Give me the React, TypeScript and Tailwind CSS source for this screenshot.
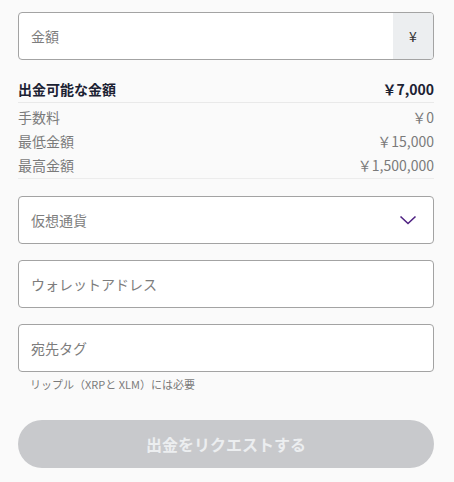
import React from "react";

const font = { fontFamily: '"Noto Sans CJK JP", "Noto Sans", sans-serif' };

function Row({ label, value }: { label: string; value: string }) {
  return (
    <div className="flex h-[24px] items-center justify-between text-[14px] text-[#7a7a7a]">
      <span>{label}</span>
      <span>{value}</span>
    </div>
  );
}

function TextBox({ placeholder }: { placeholder: string }) {
  return (
    <div className="flex h-[48px] items-center rounded-[4px] border border-[#a3a3a3] bg-white pl-[12px] text-[14px] text-[#7d7d7d]">
      {placeholder}
    </div>
  );
}

export default function App() {
  return (
    <div className="min-h-[482px] w-[454px] bg-[#fafafa] px-[18px] pt-[12px]" style={font}>
      <div className="w-[416px]">
        <div className="flex h-[48px] overflow-hidden rounded-[4px] border border-[#a3a3a3] bg-white">
          <div className="flex flex-1 items-center pl-[12px] text-[14px] text-[#7d7d7d]">金額</div>
          <div className="flex w-[40px] items-center justify-center bg-[#eceef0] text-[14px] text-[#333]">¥</div>
        </div>

        <div className="mt-[16px]">
          <div className="flex h-[27px] items-center justify-between border-b border-[#e9e9e9] text-[14px] font-bold text-[#1c2233]">
            <span>出金可能な金額</span>
            <span>￥7,000</span>
          </div>
          <div className="border-b border-[#ececec] pt-[2px] pb-[1px]">
            <Row label="手数料" value="￥0" />
            <Row label="最低金額" value="￥15,000" />
            <Row label="最高金額" value="￥1,500,000" />
          </div>
        </div>

        <div className="mt-[17px] flex h-[48px] items-center justify-between rounded-[4px] border border-[#a3a3a3] bg-white pl-[12px] pr-[16px] text-[14px] text-[#7d7d7d]">
          <span>仮想通貨</span>
          <svg width="18" height="10" viewBox="0 0 18 10" fill="none">
            <path d="M1.5 1.5 L9 8.5 L16.5 1.5" stroke="#4e2182" strokeWidth="1.6" />
          </svg>
        </div>

        <div className="mt-[16px]">
          <TextBox placeholder="ウォレットアドレス" />
        </div>
        <div className="mt-[16px]">
          <TextBox placeholder="宛先タグ" />
        </div>
        <div className="mt-[4px] pl-[12px] text-[11px] leading-[16px] text-[#7a7a7a]">
          リップル（XRPと XLM）には必要
        </div>

        <button className="mt-[28px] flex h-[48px] w-full items-center justify-center rounded-full bg-[#c8c9cc] text-[16px] font-bold text-[#eceef0]">
          出金をリクエストする
        </button>
      </div>
    </div>
  );
}
